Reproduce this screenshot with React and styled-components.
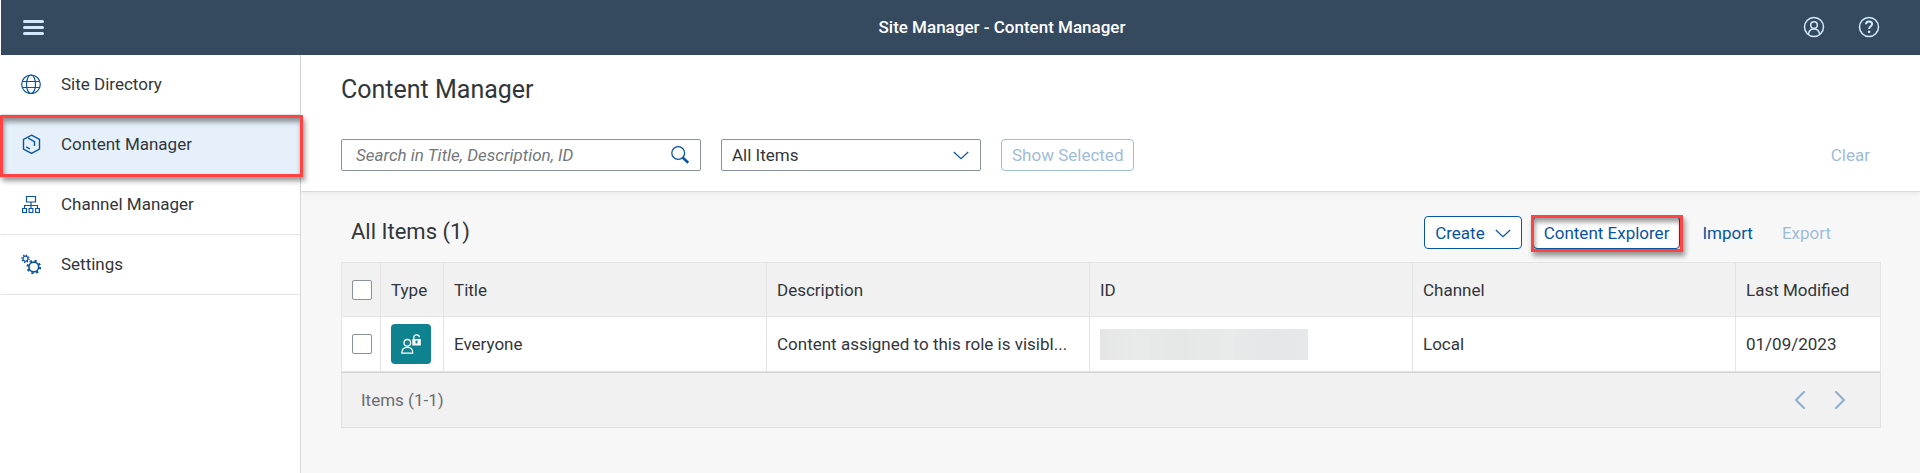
import React from "react";
import styled, { createGlobalStyle, css } from "styled-components";

const GlobalStyle = createGlobalStyle`
  *, *::before, *::after { box-sizing: border-box; }
  body { margin: 0; background: #fff; }
  body, button, input, select {
    font-family: Roboto, "Liberation Sans", sans-serif;
    font-size: 17px;
    line-height: 24px;
    color: #32363a;
  }
  svg { display: block; flex: none; }
`;

const Page = styled.div`
  display: flex;
  flex-direction: column;
  min-height: 100vh;
  padding-left: 1px;
`;

const ShellBar = styled.header`
  display: grid;
  grid-template-columns: 180px 1fr auto;
  align-items: center;
  height: 55px;
  padding: 0 40px 2px 20px;
  background: #354a5f;
  color: #d1e8ff;
`;

const ShellTitle = styled.div`
  color: #fff;
  font-weight: 500;
  text-align: center;
`;

const ShellActions = styled.div`
  display: flex;
  justify-content: flex-end;
  gap: 33px;
`;

const IconButton = styled.button`
  display: inline-flex;
  justify-self: start;
  padding: 0;
  border: 0;
  background: none;
  color: inherit;
`;

const Body = styled.div`
  display: flex;
  flex: 1;
`;

const SideNav = styled.nav`
  flex: 0 0 300px;
  border-right: 1px solid #d5d7d9;
`;

const callout = css`
  position: relative;
  &::after {
    content: "";
    position: absolute;
    z-index: 1;
    border: 3px solid #ff4343;
    box-shadow: 2px 4px 5px rgba(0, 0, 0, 0.4), inset 1px 4px 5px rgba(0, 0, 0, 0.4);
    pointer-events: none;
  }
`;

const NavItem = styled.a`
  display: flex;
  align-items: center;
  gap: 20px;
  height: 60px;
  padding: 0 20px 2px;
  border-bottom: 1px solid #e4e4e4;
  color: #32363a;
  text-decoration: none;
  background: ${(p) => (p.$selected ? "#e5f0fa" : "#fff")};
  svg { color: #0854a0; }
  ${(p) => p.$selected && css`
    ${callout}
    &::after { inset: 0 -3px -3px -1px; }
  `}
`;

const Main = styled.main`
  flex: 1;
  min-width: 0;
  background: #f7f7f7;
`;

const PageHeader = styled.section`
  padding: 19px 39px 20px 40px;
  background: #fff;
  border-bottom: 1px solid #d9d9d9;
  box-shadow: 0 2px 4px rgba(0, 0, 0, 0.05);
`;

const PageTitle = styled.h1`
  margin: 0 0 33px;
  font-size: 25px;
  line-height: 32px;
  font-weight: 400;
`;

const FilterBar = styled.div`
  display: flex;
  align-items: center;
  gap: 20px;
`;

const SearchField = styled.label`
  display: flex;
  align-items: center;
  width: 360px;
  height: 32px;
  padding: 0 10px 0 14px;
  border: 1px solid #89919a;
  border-radius: 2px;
  background: #fff;
  color: #0854a0;
`;

const SearchInput = styled.input`
  flex: 1;
  min-width: 0;
  padding: 0;
  border: 0;
  outline: 0;
  background: none;
  &::placeholder { color: #74777a; font-style: italic; opacity: 1; }
`;

const SelectField = styled.label`
  display: grid;
  align-items: center;
  width: 260px;
  color: #0854a0;
  > * { grid-area: 1 / 1; }
  svg { justify-self: end; margin-right: 12px; pointer-events: none; }
`;

const Select = styled.select`
  appearance: none;
  width: 100%;
  height: 32px;
  padding: 0 40px 0 10px;
  border: 1px solid #89919a;
  border-radius: 2px;
  background: #fff;
`;

const Button = styled.button`
  display: inline-flex;
  align-items: center;
  gap: 10px;
  height: ${(p) => (p.$tall ? "33px" : "32px")};
  padding: 0 10px;
  border: 1px solid ${(p) => (p.$ghost ? "transparent" : "currentColor")};
  border-radius: 4px;
  background: ${(p) => (p.$ghost ? "none" : "#fff")};
  color: #0854a0;
  white-space: nowrap;
  &:disabled { color: #9fbcd9; }
  ${(p) => p.$marked && css`
    ${callout}
    &::after { inset: -2px -4px -4px -3px; }
  `}
`;

const ClearSlot = styled.div`
  margin-left: auto;
`;

const Content = styled.section`
  padding: 24px 39px 44px 40px;
`;

const Toolbar = styled.div`
  display: flex;
  align-items: center;
  gap: 11px;
  padding: 0 39px 13px 10px;
`;

const ToolbarTitle = styled.h2`
  flex: 1;
  margin: 0;
  padding-bottom: 2px;
  font-size: 22px;
  line-height: 30px;
  font-weight: 400;
`;

const Trailing = styled.div`
  display: flex;
  gap: 7px;
`;

const Table = styled.table`
  width: 100%;
  table-layout: fixed;
  border-collapse: separate;
  border-spacing: 0;
  border: 1px solid #e4e4e4;
  border-bottom-color: #d4d4d4;
`;

const Col = styled.col`
  width: ${(p) => p.$width || "auto"};
`;

const cell = css`
  padding: 0 10px;
  border-bottom: 1px solid #e4e4e4;
  text-align: left;
  font-weight: 400;
  white-space: nowrap;
  overflow: hidden;
  text-overflow: ellipsis;
  &:not(:last-child) { border-right: 1px solid #e4e4e4; }
`;

const HeadCell = styled.th`
  ${cell}
  height: 54px;
  background: #f1f1f1;
`;

const DataCell = styled.td`
  ${cell}
  height: 55px;
  background: #fff;
`;

const Checkbox = styled.input`
  appearance: none;
  display: block;
  width: 20px;
  height: 20px;
  margin: 0;
  border: 1px solid #89919a;
  border-radius: 2px;
  background: #fff;
`;

const TypeTile = styled.span`
  display: flex;
  align-items: center;
  justify-content: center;
  width: 40px;
  height: 40px;
  border-radius: 4px;
  background: #0f828f;
  color: #fff;
`;

const Redacted = styled.div`
  width: 208px;
  height: 31px;
  background: linear-gradient(90deg, #e5e5e5, #e9eaea 16%, #e5e6e6 38%, #e9eaea 62%, #e5e6e7 82%, #e6e8ea);
`;

const Pager = styled.footer`
  display: flex;
  align-items: center;
  justify-content: space-between;
  height: 55px;
  padding: 0 30px 0 19px;
  border: 1px solid #e1e1e1;
  border-top: 0;
  background: #f1f1f1;
  color: #6a6d70;
`;

const PagerButtons = styled.div`
  display: flex;
  gap: 20px;
  color: #91b1d2;
`;

const Svg = ({ size = 20, children, stroke = 1.3, ...rest }) => (
  <svg width={size} height={size} viewBox={`0 0 ${size} ${size}`} fill="none"
    stroke="currentColor" strokeWidth={stroke} aria-hidden="true" {...rest}>
    {children}
  </svg>
);

const MenuIcon = () => (
  <Svg size={24} stroke={3} strokeLinecap="round"><path d="M3.5 6.5h18M3.5 12.5h18M3.5 18.5h18" /></Svg>
);
const UserIcon = () => (
  <Svg size={22} stroke={1.5}>
    <circle cx="11" cy="11" r="9.5" />
    <circle cx="11" cy="9" r="3.3" />
    <path d="M5.5 18c.4-3.400 2.500-5 5.500-5s5.100 1.600 5.500 5" />
  </Svg>
);
const HelpIcon = () => (
  <Svg size={22} stroke={1.5}>
    <circle cx="11" cy="11" r="9.5" />
    <path d="M8 8.300c0-1.800 1.200-2.800 3-2.800s3.100 1 3.100 2.600c0 2.200-3 2.300-3 4.900" strokeWidth="2" />
    <path d="M11.100 14.700v2.200" strokeWidth="2.4" />
  </Svg>
);
const GlobeIcon = () => (
  <Svg stroke={1.2}>
    <circle cx="10" cy="10.3" r="9.3" />
    <ellipse cx="10" cy="10.3" rx="4.5" ry="9.3" />
    <path d="M1.500 7.500h17M1.500 13.500h17" />
  </Svg>
);
const HexIcon = () => (
  <Svg stroke={1.4}>
    <path d="M10.500 1.200l8 4.300v9.600l-8 4.300-8-4.300V5.500z" />
    <path d="M7.200 4.200l6.300 3.500v4.300M5.200 12.800l3.800 2.200" />
  </Svg>
);
const OrgIcon = () => (
  <Svg stroke={1.2}>
    <path d="M5.500 2.500h9v5.500h-9zM10 8v6.500M3.500 14.500v-3h13v3M1.600 14.500h3.800v4H1.600zM8.100 14.500h3.800v4H8.100zM14.600 14.500h3.800v4h-3.800z" />
  </Svg>
);
const GearsIcon = () => (
  <Svg stroke={1.6}>
    <circle cx="12.800" cy="13" r="4.9" />
    <circle cx="12.800" cy="13" r="6.3" strokeWidth="2" strokeDasharray="2.2 2.748" />
    <circle cx="4.500" cy="4.700" r="2.5" strokeWidth="1.2" />
    <circle cx="4.500" cy="4.700" r="3.6" strokeWidth="1.4" strokeDasharray="1.3 1.527" />
  </Svg>
);
const SearchIcon = () => (
  <Svg>
    <circle cx="8.200" cy="8" r="6.4" />
    <path d="M12.800 12.600l5.400 5.200" strokeWidth="2.6" />
  </Svg>
);
const ChevronDown = () => (
  <svg width="16" height="16" viewBox="0 0 16 16" fill="none" stroke="currentColor" strokeWidth="1.2" aria-hidden="true">
    <path d="M.8 5L8 11.700 15.200 5" />
  </svg>
);
const Chevron = ({ right }) => (
  <Svg stroke={2.3} strokeLinecap="round" strokeLinejoin="round">
    <path d={right ? "M6 2l8 8-8 8" : "M14 2l-8 8 8 8"} />
  </Svg>
);
const RoleIcon = () => (
  <Svg>
    <circle cx="6.300" cy="8.800" r="3.3" />
    <path d="M.8 19.200c0-3.800 1.600-5.800 5.500-5.800s5.500 2 5.500 5.800z" />
    <path d="M12.800 5.500V3.200c0-3.200 5.600-3.200 5.600 0" />
    <path d="M11.300 5h8.500v6.500h-8.500z" fill="currentColor" stroke="none" />
    <path d="M15.500 6.500v3" stroke="#0f828f" strokeWidth="2" />
  </Svg>
);

const navItems = [
  { label: "Site Directory", icon: GlobeIcon },
  { label: "Content Manager", icon: HexIcon, selected: true },
  { label: "Channel Manager", icon: OrgIcon },
  { label: "Settings", icon: GearsIcon },
];

const columns = ["Type", "Title", "Description", "ID", "Channel", "Last Modified"];

export default function App() {
  return (
    <Page>
      <GlobalStyle />
      <ShellBar>
        <IconButton aria-label="Menu"><MenuIcon /></IconButton>
        <ShellTitle>Site Manager - Content Manager</ShellTitle>
        <ShellActions>
          <IconButton aria-label="Profile"><UserIcon /></IconButton>
          <IconButton aria-label="Help"><HelpIcon /></IconButton>
        </ShellActions>
      </ShellBar>
      <Body>
        <SideNav>
          {navItems.map(({ label, icon: Icon, selected }) => (
            <NavItem key={label} href="#" $selected={selected} aria-current={selected ? "page" : undefined}>
              <Icon />
              {label}
            </NavItem>
          ))}
        </SideNav>
        <Main>
          <PageHeader>
            <PageTitle>Content Manager</PageTitle>
            <FilterBar>
              <SearchField>
                <SearchInput type="text" aria-label="Search" placeholder="Search in Title, Description, ID" />
                <SearchIcon />
              </SearchField>
              <SelectField>
                <Select aria-label="Item filter"><option>All Items</option></Select>
                <ChevronDown />
              </SelectField>
              <Button disabled>Show Selected</Button>
              <ClearSlot><Button $ghost disabled>Clear</Button></ClearSlot>
            </FilterBar>
          </PageHeader>
          <Content>
            <Toolbar>
              <ToolbarTitle>All Items (1)</ToolbarTitle>
              <Button $tall>Create <ChevronDown /></Button>
              <Button $tall $marked>Content Explorer</Button>
              <Trailing>
                <Button $tall $ghost>Import</Button>
                <Button $tall $ghost disabled>Export</Button>
              </Trailing>
            </Toolbar>
            <Table>
              <colgroup>
                <Col $width="39px" />
                <Col $width="63px" />
                <Col /><Col /><Col /><Col />
                <Col $width="144px" />
              </colgroup>
              <thead>
                <tr>
                  <HeadCell><Checkbox type="checkbox" aria-label="Select all" /></HeadCell>
                  {columns.map((c) => <HeadCell key={c} scope="col">{c}</HeadCell>)}
                </tr>
              </thead>
              <tbody>
                <tr>
                  <DataCell><Checkbox type="checkbox" aria-label="Select Everyone" /></DataCell>
                  <DataCell><TypeTile><RoleIcon /></TypeTile></DataCell>
                  <DataCell>Everyone</DataCell>
                  <DataCell>Content assigned to this role is visibl...</DataCell>
                  <DataCell><Redacted /></DataCell>
                  <DataCell>Local</DataCell>
                  <DataCell>01/09/2023</DataCell>
                </tr>
              </tbody>
            </Table>
            <Pager>
              Items (1-1)
              <PagerButtons>
                <IconButton aria-label="Previous page"><Chevron /></IconButton>
                <IconButton aria-label="Next page"><Chevron right /></IconButton>
              </PagerButtons>
            </Pager>
          </Content>
        </Main>
      </Body>
    </Page>
  );
}
